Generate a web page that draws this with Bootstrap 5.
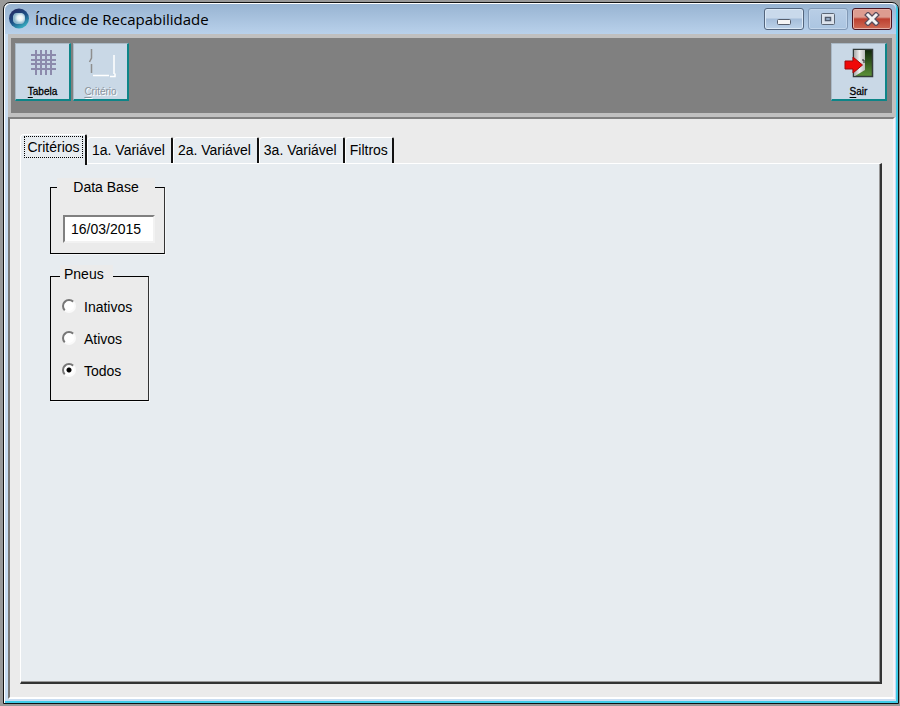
<!DOCTYPE html>
<html lang="pt-BR">
<head>
<meta charset="utf-8">
<meta name="viewport" content="width=device-width, initial-scale=1">
<title>Índice de Recapabilidade</title>
<link href="https://cdn.jsdelivr.net/npm/bootstrap@5.3.0/dist/css/bootstrap.min.css" rel="stylesheet">
<style>
body{background:#999;font:14px/18px "Liberation Sans",Arial,sans-serif;color:#000;padding:2px 1px 2px 3px}
.win{border:1px solid #111;border-radius:7px 7px 0 0;background:#c9ddf2;box-shadow:inset 1px 1px 0 #fff,inset -2px -2px 0 #3fcbe8;padding:1px 3px 4px 4px}
.titlebar{height:30px;margin:0 -1px 0 -3px;padding:0 4px 0 3px;border-radius:6px 6px 0 0;background:linear-gradient(#98b4d2,#b9d1eb)}
.win-title{font:15px/20px "Open Sans","Noto Sans",sans-serif;margin:0 0 0 5px}
.win-btn{width:40px;height:22px;border:1px solid #53657d;border-radius:3px;background:linear-gradient(#c9d9eb 45%,#a5bdd9 50%,#bcd2e9);box-shadow:inset 0 0 0 1px #dce9f6}
.win-btn:nth-child(2){border-color:#8199b6;background:linear-gradient(#b9cee6,#abc5e1);box-shadow:inset 0 0 0 1px #c3d6eb}
.win-btn.win-close{border-color:#4a1420;background:linear-gradient(#dd9c90 40%,#bd4030 50%,#cf6a55);box-shadow:inset 0 0 0 1px #e6afa6}
.toolbar{background:#c0c0c0;padding:4px 4px 4px 3px;margin-right:-1px}
.toolbar-well{background:#808080;padding:5px 5px 11px 4px;gap:2px}
.tool{width:56px;height:58px;border:1px solid #aab9c6;border-right:2px solid #0d8588;border-bottom:2px solid #0d8588;background:#c9d8e6;font:10px/12px "Liberation Sans",Arial,sans-serif;padding:4px 0 1px;color:#000;-webkit-text-stroke:.3px}
.toolbar-well{padding-bottom:12px}
.tool:disabled{color:#8b939c;text-shadow:1px 1px #fff;-webkit-text-stroke:0}
.tool u{text-underline-offset:2px}
.client{background:#ebebeb;border:2px solid #808080;border-left-color:#777;border-right:2px solid #f5f3fa;border-bottom:2px solid #fff;padding:15px 11px 13px 10px}
.tabs{position:relative;height:31px;margin-bottom:-2px}
.tabs .tab{height:26px;padding:0 6px 2px 4px;border:0;border-top:1px solid #fff;border-left:1px solid #fff;border-right:2px solid #111;border-radius:4px 2px 0 0;background:#e7ecf0;color:#000;margin-bottom:2px;font-size:14px;line-height:18px;white-space:nowrap}
.tabs .tab.active{height:31px;width:67px;margin-bottom:0;padding:0 2px 6px 3px}
.tabs .tab:last-child{padding-right:4px}
.tab.active span{display:block;border:1px dotted #000;line-height:20px}
.panel{background:#e7ecf0;border:1px solid #fff;border-right:2px solid #333;border-bottom:2px solid #333;box-shadow:inset -1px -1px 0 #999;padding:14px 29px}
.group{border:1px solid #000;border-right-color:#333;box-shadow:1px 1px 0 #f4f6f8;background:#ebebeb}
.group legend{float:none;font-size:14px;line-height:18px;background:#ebebeb;margin:0}
.group-date{width:115px;padding:0 8px 10px 12px}
.group-date legend{width:98px;margin-left:-6px;text-align:center}
.date-box{width:92px;height:28px;margin-top:19px;border:2px solid #808080;border-right-color:#f2f2f2;border-bottom-color:#f2f2f2;background:#fff;padding:0 6px;font-size:14px;outline-offset:0}
.group-tyres{width:99px;margin-top:11px;padding:0 4px 13px 11px}
.group .tyres-title{width:53px;margin-left:-2px;padding:0 0 4px 4px}
.option{height:32px}
.option:nth-of-type(1){margin-top:4px}
.option input{appearance:none;width:14px;height:14px;margin:0 8px 3px 0;border:2px solid;border-color:#777 #fafafa #fafafa #777;border-radius:50%;background:#fff}
.option input:checked{background:radial-gradient(circle,#000 2px,#fff 3px)}
</style>
<script src="https://cdn.jsdelivr.net/npm/bootstrap@5.3.0/dist/js/bootstrap.bundle.min.js"></script>
</head>
<body class="min-vh-100 d-flex">
<div class="win flex-grow-1 d-flex flex-column">
  <header class="titlebar d-flex align-items-center flex-shrink-0">
    <svg width="22" height="22" viewBox="0 0 22 22" aria-hidden="true">
      <defs><linearGradient id="ring" x1="0.200" y1="0" x2="0.800" y2="1"><stop offset="0" stop-color="#272a62"/><stop offset=".5" stop-color="#1c4f86"/><stop offset="1" stop-color="#3cc0cc"/></linearGradient>
      <radialGradient id="core" cx=".6" cy=".45"><stop offset="0" stop-color="#fff"/><stop offset=".5" stop-color="#e4f0f5"/><stop offset="1" stop-color="#8fb8cd"/></radialGradient></defs>
      <circle cx="11" cy="10.500" r="10" fill="url(#ring)"/><path d="M8 5h6q3 1 3 4v3q-1 4-4 4H9q-4-1-4-4V8q1-3 3-3z" fill="url(#core)"/>
    </svg>
    <h1 class="win-title flex-grow-1">Índice de Recapabilidade</h1>
    <div class="d-flex gap-1">
      <button class="win-btn p-0 d-flex align-items-center justify-content-center" type="button" aria-label="Minimizar"><svg width="16" height="14"><rect x="1.500" y="7.500" width="13" height="5" rx="1" fill="#f5f5f5" stroke="#555d6c"/></svg></button>
      <button class="win-btn p-0 d-flex align-items-center justify-content-center" type="button" aria-label="Maximizar"><svg width="16" height="14"><rect x="1.500" y="1.500" width="13" height="11" rx="1" fill="#dce3ec" stroke="#5b6675"/><rect x="5.500" y="5.500" width="5" height="3" fill="#a9c2df" stroke="#4f5a6b" stroke-width="1.500"/></svg></button>
      <button class="win-btn win-close p-0 d-flex align-items-center justify-content-center" type="button" aria-label="Fechar"><svg width="16" height="14"><path d="M4 3l8 8M12 3l-8 8" stroke="#5a4d5c" stroke-width="5.500" stroke-linecap="square"/><path d="M4 3l8 8M12 3l-8 8" stroke="#f3f3f3" stroke-width="3" stroke-linecap="square"/></svg></button>
    </div>
  </header>
  <div class="toolbar flex-shrink-0">
    <div class="toolbar-well d-flex">
      <button class="tool d-flex flex-column align-items-center justify-content-between" type="button">
        <svg width="28" height="30" aria-hidden="true"><g fill="none" stroke="#8c8aac" stroke-width="2"><path d="M2 7h25M2 12h25M2 16h25M2 21h25M7 2v25M12 2v25M17 2v25M22 2v25"/></g></svg>
        <span><u>T</u>abela</span>
      </button>
      <button class="tool me-auto d-flex flex-column align-items-center justify-content-between" type="button" disabled>
        <svg width="30" height="32" aria-hidden="true"><path d="M5.500 1v9l-2 4M5.500 16v9" fill="none" stroke="#8e8e8e" stroke-width="1.500"/><path d="M7 27.500h16M28 7v19M24 28.500h5v-3" fill="none" stroke="#fff" stroke-width="1.500"/></svg>
        <span><u>C</u>ritério</span>
      </button>
      <button class="tool d-flex flex-column align-items-center justify-content-between" type="button">
        <svg width="32" height="32" aria-hidden="true">
          <defs><linearGradient id="green" x1="0" y1="0" x2="0" y2="1"><stop offset="0" stop-color="#10250b"/><stop offset="1" stop-color="#5d9338"/></linearGradient><linearGradient id="door"><stop offset="0" stop-color="#a9a9a9"/><stop offset=".5" stop-color="#eee"/><stop offset="1" stop-color="#bbb"/></linearGradient></defs>
          <rect x="10.500" y="1.500" width="19" height="27" fill="url(#green)" stroke="#333b3a" stroke-width="1.500"/>
          <path d="M11 2h11v20l-10 6h-1z" fill="url(#door)"/><path d="M19 12h2v3" stroke="#222" fill="none"/>
          <path d="M2 13h8V9l9.500 8-9.500 8v-4H2z" fill="#f00808" stroke="#9d0b0b"/>
        </svg>
        <span><u>S</u>air</span>
      </button>
    </div>
  </div>
  <main class="client flex-grow-1 d-flex flex-column">
    <div class="tabs d-flex align-items-end flex-shrink-0" role="tablist">
      <button class="tab active" type="button" role="tab" id="tab-crit" aria-selected="true" aria-controls="criterios"><span>Critérios</span></button>
      <button class="tab" type="button" role="tab" aria-selected="false">1a. Variável</button>
      <button class="tab" type="button" role="tab" aria-selected="false">2a. Variável</button>
      <button class="tab" type="button" role="tab" aria-selected="false">3a. Variável</button>
      <button class="tab" type="button" role="tab" aria-selected="false">Filtros</button>
    </div>
    <section class="panel flex-grow-1" id="criterios" role="tabpanel" aria-labelledby="tab-crit">
      <fieldset class="group group-date">
        <legend><label for="data-base">Data Base</label></legend>
        <input class="date-box d-block" id="data-base" type="text" value="16/03/2015">
      </fieldset>
      <fieldset class="group group-tyres">
        <legend class="tyres-title">Pneus</legend>
        <div class="option d-flex align-items-center"><input type="radio" name="pneus" id="inativos"><label for="inativos">Inativos</label></div>
        <div class="option d-flex align-items-center"><input type="radio" name="pneus" id="ativos"><label for="ativos">Ativos</label></div>
        <div class="option d-flex align-items-center"><input type="radio" name="pneus" id="todos" checked><label for="todos">Todos</label></div>
      </fieldset>
    </section>
  </main>
</div>
</body>
</html>
